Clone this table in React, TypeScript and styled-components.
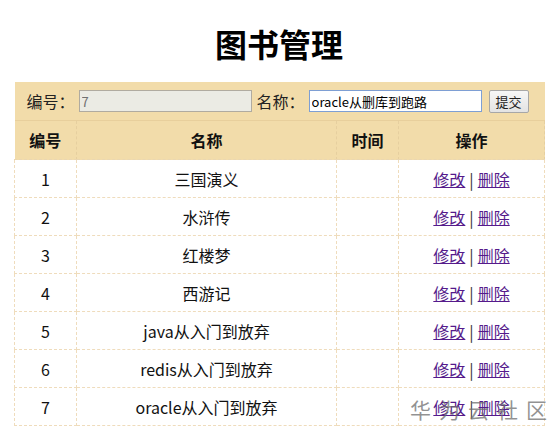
import React from "react";
import styled, { createGlobalStyle } from "styled-components";

const Global = createGlobalStyle`
  html, body { margin: 0; padding: 0; background: #fff; }
  body { font-family: "Noto Sans CJK SC", "Noto Sans", sans-serif; color: #222; }
`;

const Page = styled.div`
  position: relative;
  width: 555px;
  height: 438px;
  overflow: hidden;
  padding-left: 14px;
  box-sizing: border-box;
`;

const Title = styled.h1`
  margin: 0;
  width: 530px;
  padding-top: 21px;
  height: 82px;
  box-sizing: border-box;
  text-align: center;
  font-size: 32px;
  line-height: 44px;
  font-weight: 700;
  color: #000;
`;

const Table = styled.table`
  width: 530px;
  border-collapse: collapse;
  font-size: 16px;
  table-layout: fixed;
`;

const Col = styled.col<{ $w: number }>`
  width: ${(p) => p.$w}px;
`;

const FormCell = styled.td`
  background: #f2dcaa;
  height: 38px;
  padding: 0 0 0 12px;
  border-bottom: 1px solid #e8cf9c;
`;

const FormRow = styled.div`
  display: flex;
  align-items: center;
`;

const Label = styled.span`
  font-size: 16px;
  color: #222;
  margin-right: 4px;
`;

const Input = styled.input<{ $disabled?: boolean }>`
  width: 173px;
  height: 22px;
  box-sizing: border-box;
  padding: 0 2px;
  font-family: "Noto Sans CJK SC", sans-serif;
  font-size: 13px;
  background: ${(p) => (p.$disabled ? "#ebebe4" : "#fff")};
  color: ${(p) => (p.$disabled ? "#707070" : "#000")};
  border: 1px solid ${(p) => (p.$disabled ? "#b0aba0" : "#7e9fd4")};
  outline: none;
  margin-right: 5px;
`;

const Button = styled.button`
  height: 23px;
  width: 40px;
  margin-left: 2px;
  padding: 0;
  font-family: "Noto Sans CJK SC", sans-serif;
  font-size: 13px;
  color: #222;
  background: linear-gradient(#f7f7f7, #e3e3e3);
  border: 1px solid #a7a7a7;
  border-radius: 2px;
`;

const Th = styled.th`
  height: 38px;
  padding: 0;
  background: #f2dcaa;
  font-weight: 700;
  text-align: center;
  color: #111;
  border-right: 1px dashed #e6cf9f;
  border-bottom: 1px dashed #ead7b2;
`;

const Td = styled.td`
  height: 37px;
  padding: 0;
  text-align: center;
  color: #111;
  white-space: nowrap;
  border: 1px dashed #efdcbc;
`;

const Link = styled.a`
  color: #551a8b;
  text-decoration: underline;
  cursor: pointer;
`;

const Sep = styled.span`
  color: #333;
  margin: 0 4px;
`;

const Watermark = styled.div`
  position: absolute;
  left: 410px;
  top: 394px;
  font-size: 21px;
  letter-spacing: 8px;
  color: rgba(110, 110, 110, 0.75);
  pointer-events: none;
`;

const books = [
  "三国演义",
  "水浒传",
  "红楼梦",
  "西游记",
  "java从入门到放弃",
  "redis从入门到放弃",
  "oracle从入门到放弃",
];

export default function App() {
  return (
    <Page>
      <Global />
      <Title>图书管理</Title>
      <Table>
        <colgroup>
          <Col $w={62} />
          <Col $w={260} />
          <Col $w={62} />
          <Col $w={146} />
        </colgroup>
        <thead>
          <tr>
            <FormCell colSpan={4}>
              <FormRow>
                <Label>编号：</Label>
                <Input $disabled disabled defaultValue="7" />
                <Label>名称：</Label>
                <Input defaultValue="oracle从删库到跑路" />
                <Button>提交</Button>
              </FormRow>
            </FormCell>
          </tr>
          <tr>
            <Th>编号</Th>
            <Th>名称</Th>
            <Th>时间</Th>
            <Th>操作</Th>
          </tr>
        </thead>
        <tbody>
          {books.map((b, i) => (
            <tr key={i}>
              <Td>{i + 1}</Td>
              <Td>{b}</Td>
              <Td></Td>
              <Td>
                <Link>修改</Link>
                <Sep>|</Sep>
                <Link>删除</Link>
              </Td>
            </tr>
          ))}
        </tbody>
      </Table>
      <Watermark>华为云社区</Watermark>
    </Page>
  );
}
